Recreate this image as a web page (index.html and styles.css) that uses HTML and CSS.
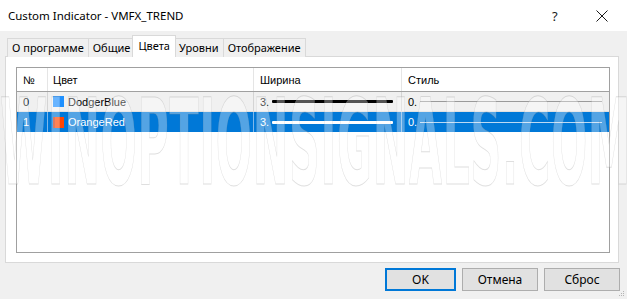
FILE: index.html
```html
<!DOCTYPE html>
<html>
<head>
<meta charset="utf-8">
<link rel="stylesheet" href="styles.css">
</head>
<body>
<div class="window">
  <div class="titlebar">
    <span class="title">Custom Indicator - VMFX_TREND</span>
    <span class="help">?</span>
    <svg class="close" width="12" height="12" viewBox="0 0 12 12"><path d="M0.5 0.5L11.5 11.5M11.5 0.5L0.5 11.5" stroke="#1a1a1a" stroke-width="1"/></svg>
  </div>
  <div class="tabstrip">
    <div class="tab">О программе</div>
    <div class="tab">Общие</div>
    <div class="tab active">Цвета</div>
    <div class="tab">Уровни</div>
    <div class="tab">Отображение</div>
  </div>
  <div class="panel">
    <div class="grid">
      <div class="row head">
        <div class="c c1">№</div>
        <div class="c c2">Цвет</div>
        <div class="c c3">Ширина</div>
        <div class="c c4">Стиль</div>
      </div>
      <div class="row r0">
        <div class="c c1">0</div>
        <div class="c c2"><span class="sw blue"></span>DodgerBlue</div>
        <div class="c c3">3.<span class="wline"></span></div>
        <div class="c c4">0.<span class="sline"></span></div>
      </div>
      <div class="row sel">
        <div class="c c1">1</div>
        <div class="c c2"><span class="sw orange"></span>OrangeRed</div>
        <div class="c c3">3.<span class="wline"></span></div>
        <div class="c c4">0.<span class="sline"></span></div>
      </div>
    </div>
  </div>
  <div class="buttons">
    <button class="btn default">OK</button>
    <button class="btn">Отмена</button>
    <button class="btn">Сброс</button>
  </div>
  <svg class="grip" width="6" height="6" viewBox="0 0 6 6"><g fill="#b4b4b4"><rect x="4" y="0" width="1" height="1"/><rect x="2" y="2" width="1" height="1"/><rect x="4" y="2" width="1" height="1"/><rect x="0" y="4" width="1" height="1"/><rect x="2" y="4" width="1" height="1"/><rect x="4" y="4" width="1" height="1"/></g></svg>
  <div class="watermark">WINOPTIONSIGNALS.COM</div>
</div>
</body>
</html>
```
FILE: styles.css
```css
* { box-sizing: border-box; }
body { margin: 0; background: #f0f0f0; }
.window {
  position: relative;
  width: 627px; height: 299px;
  background: #f0f0f0;
  font-family: "Noto Sans", "Open Sans", sans-serif;
  font-size: 12px; color: #000;
  display: flex; flex-direction: column;
  overflow: hidden;
}
.titlebar {
  height: 31px; background: #fff;
  display: flex; align-items: center;
  padding-left: 8px;
}
.title { flex: 1; font-size: 11.5px; color: #000; }
.help { width: 12px; margin-right: 32px; font-size: 13px; color: #1a1a1a; }
.close { margin-right: 19px; }
.tabstrip {
  margin-top: 4px; padding-left: 7px;
  height: 22px;
  display: flex; align-items: flex-end;
  position: relative; z-index: 2;
  margin-bottom: -1px;
  font-size: 11px;
}
.tab {
  height: 19px; padding: 0 4px;
  border: 1px solid #d9d9d9; border-bottom: none;
  margin-right: -1px;
  background: #f0f0f0;
  line-height: 17px; white-space: nowrap;
}
.tab.active {
  height: 22px; background: #fff;
  padding: 0 5px;
  margin-left: -2px; margin-right: -2px;
  position: relative; z-index: 3;
  line-height: 19px;
}
.panel {
  margin: 0 8px 0 5px;
  height: 207px;
  background: #fff;
  border: 1px solid #d9d9d9;
  padding: 10px 0 0 10px;
}
.grid {
  width: 594px; height: 186px;
  border: 1px solid #a0a0a0;
  background: #fff;
  font-family: "Liberation Sans", Arial, sans-serif;
  font-size: 11px;
}
.row { display: flex; }
.c {
  display: flex; align-items: center;
  padding-left: 6px; white-space: nowrap;
  border-right: 1px solid #d4d4d4;
}
.c1 { width: 31px; }
.c2 { width: 206px; padding-left: 5px; }
.c3 { width: 148px; }
.c4 { flex: 1; border-right: none; }
.head { height: 24px; border-bottom: 1px solid #a0a0a0; color: #000; }
.head .c { border-right-color: #e5e5e5; }
.r0 { height: 20px; background: #f0f0f0; border-bottom: 1px solid #e0e0e0; }
.sel { height: 20px; background: #0078d7; color: #fff; }
.sel .c { border-right-color: #7fb8ea; }
.sw {
  width: 11px; height: 11px; margin-right: 4px;
  display: inline-block;
}
.sw.blue { background: #1e90ff; }
.sw.orange { background: #ff4500; border-left: 2px solid #c8391a; }
.wline {
  display: inline-block; height: 3px; width: 121px;
  margin-left: 3px; background: #000; border-radius: 1px;
}
.sel .wline { background: #fff; }
.sline {
  display: inline-block; height: 1px; width: 182px;
  margin-left: 3px; background: #9a9a9a;
}
.sel .sline { background: #bcd9f3; }
.buttons {
  display: flex; justify-content: flex-end;
  gap: 10px;
  margin-top: 5px; padding-right: 7px;
}
.btn {
  height: 23px; width: 76px;
  background: #e1e1e1;
  border: 1px solid #adadad;
  font-family: "Noto Sans", "Open Sans", sans-serif;
  font-size: 12px; color: #000;
  padding: 0;
}
.btn.default { width: 71px; border: 2px solid #0078d7; }
.btn + .btn { margin-left: -4px; }
.grip { position: absolute; right: 2px; bottom: 2px; }
.watermark {
  position: absolute; left: 0; top: 83px;
  font-family: "DejaVu Sans", sans-serif; font-weight: bold;
  font-size: 120px; line-height: 1;
  white-space: nowrap;
  color: rgba(255,255,255,0.33);
  -webkit-text-stroke: 1px rgba(150,150,150,0.3);
  transform: scaleX(0.355); transform-origin: 0 0;
  pointer-events: none;
  letter-spacing: 2px;
}
```
